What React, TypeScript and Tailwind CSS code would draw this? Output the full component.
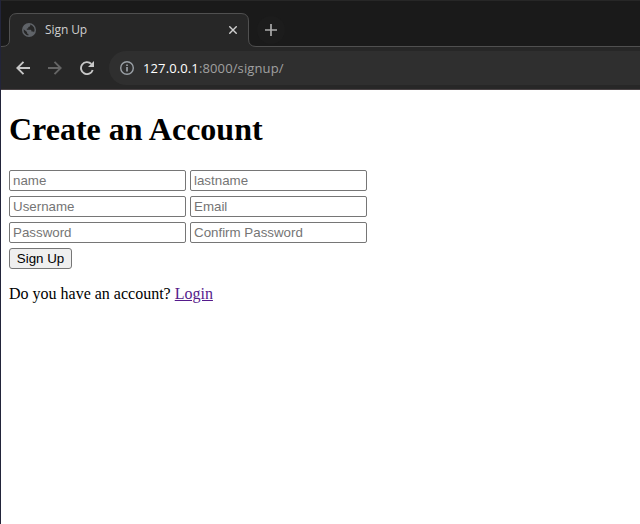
import React from "react";

function TabOutline() {
  return (
    <svg className="absolute left-0 top-0 h-[36px] w-[639px]" viewBox="0 0 639 36" fill="none">
      <path
        d="M0 33.5H1Q8.5 33.5 8.5 27V8Q8.5 .5 16 .5H240Q247.5 .5 247.5 8V26Q247.5 33.5 255 33.5H639V36H0Z"
        fill="#272727"
      />
      <path
        d="M0 33.5H1Q8.5 33.5 8.5 27V8Q8.5 .5 16 .5H240Q247.5 .5 247.5 8V26Q247.5 33.5 255 33.5H639"
        stroke="#505050"
      />
    </svg>
  );
}

function GlobeIcon() {
  return (
    <svg className="h-[14px] w-[14px]" viewBox="0 0 14 14">
      <circle cx="7" cy="7" r="7" fill="#5f6368" />
      <path
        d="M7.9 1.6Q8.9 2.6 7.8 3.5L6.3 4.1V5.4H4.8V6.8H8.6Q9.6 7.1 9.5 8.5H11Q11.9 8.6 12 9.4Q13.2 7 12 4.6Q10.6 2 7.9 1.6ZM1.6 6.2Q1.3 9 3 10.8Q4.5 12.4 6.4 12.5V11.1Q5.1 11 5 9.7V9.1Z"
        fill="#272727"
      />
    </svg>
  );
}

function BrowserTabs() {
  return (
    <div className="h-[48px] border-t border-[#272727] bg-[#1a1a1a] pt-[12px]">
      <div className="relative h-[35px]">
        <TabOutline />
        <div className="relative flex h-[34px] items-center">
          <div className="ml-[8px] flex w-[240px] items-center pl-[13px]">
            <GlobeIcon />
            <span className="ml-[9px] w-[184px] font-['Open_Sans','Noto_Sans',sans-serif] text-[12px] leading-[16px] tracking-[-0.08px] text-[#cfcfcf]">
              Sign Up
            </span>
            <svg className="h-[8px] w-[8px]" viewBox="0 0 8 8" fill="none" stroke="#d0d0d0" strokeWidth="1.4">
              <path d="M.3 .3L7.7 7.7M7.7 .3L.3 7.7" />
            </svg>
          </div>
          <span className="ml-[8px] flex h-[28px] w-[28px] items-center justify-center rounded-full bg-[#1c1c1c]">
            <svg className="h-[12px] w-[12px]" viewBox="0 0 12 12" fill="none" stroke="#aaa" strokeWidth="1.7">
              <path d="M6 0V12M0 6H12" />
            </svg>
          </span>
        </div>
      </div>
    </div>
  );
}

function Toolbar() {
  return (
    <div className="flex h-[42px] items-center border-b border-[#4a4345] bg-[#272727] pb-[1px] pl-[15px]">
      <svg className="h-[14px] w-[14px]" viewBox="0 0 14 14" fill="none" stroke="#c7c7c7" strokeWidth="1.9">
        <path d="M14 7H1.5M7.5 .8L1.3 7L7.5 13.2" />
      </svg>
      <svg className="ml-[18px] h-[14px] w-[14px]" viewBox="0 0 14 14" fill="none" stroke="#656565" strokeWidth="1.9">
        <path d="M0 7H12.5M6.5 .8L12.7 7L6.5 13.2" />
      </svg>
      <svg className="ml-[18px] h-[14px] w-[14px]" viewBox="0 0 14 14" fill="none">
        <path d="M12.7 9A6 6 0 1 1 11.3 2.9" stroke="#c7c7c7" strokeWidth="1.9" />
        <path d="M14 0V6H8Z" fill="#c7c7c7" />
      </svg>
      <div className="ml-[15px] flex h-[34px] flex-1 items-center rounded-l-full bg-[#2f2f2f] pl-[11px]">
        <svg className="h-[14px] w-[14px]" viewBox="0 0 14 14" fill="none" stroke="#9aa0a6" strokeWidth="1.4">
          <circle cx="7" cy="7" r="6.3" />
          <path d="M7 6V10.5M7 3.4V5" strokeWidth="1.7" />
        </svg>
        <span className="ml-[9px] font-['Open_Sans','Noto_Sans',sans-serif] text-[13px] leading-[18px] tracking-[0.12px] text-[#a0a0a0]">
          <span className="text-white">127.0.0.1</span>:8000/signup/
        </span>
      </div>
    </div>
  );
}

function Field({ label, type = "text" }: { label: string; type?: string }) {
  return (
    <input
      type={type}
      placeholder={label}
      className="block h-[21px] w-[177px] rounded-[2px] border border-[#767676] bg-white px-[3px] py-0 font-['Liberation_Sans',Arial,sans-serif] text-[13.333px] leading-[15px] text-black placeholder:text-[#757575] placeholder:opacity-100"
    />
  );
}

function SignupPage() {
  return (
    <main className="px-[8px] pt-[21px] font-['Liberation_Serif','Times_New_Roman',serif] text-[16px] text-black">
      <h1 className="text-[32px] font-bold leading-[37px]">Create an Account</h1>
      <form className="mt-[22px]">
        <div className="grid w-fit grid-cols-2 gap-x-[4px] gap-y-[5px]">
          <Field label="name" />
          <Field label="lastname" />
          <Field label="Username" />
          <Field label="Email" />
          <Field label="Password" type="password" />
          <Field label="Confirm Password" type="password" />
        </div>
        <button
          type="button"
          className="mt-[5px] block h-[21px] w-[63px] whitespace-nowrap rounded-[3px] border border-[#767676] bg-[#efefef] p-0 font-['Liberation_Sans',Arial,sans-serif] text-[13.333px] leading-[15px]"
        >
          Sign Up
        </button>
      </form>
      <p className="mt-[16px] leading-[18px]">
        Do you have an account?{" "}
        <a href="#login" className="text-[#551a8b] underline">
          Login
        </a>
      </p>
    </main>
  );
}

export default function App() {
  return (
    <div className="h-[524px] w-[640px] overflow-hidden border-l border-[#22243a] bg-white">
      <BrowserTabs />
      <Toolbar />
      <SignupPage />
    </div>
  );
}
